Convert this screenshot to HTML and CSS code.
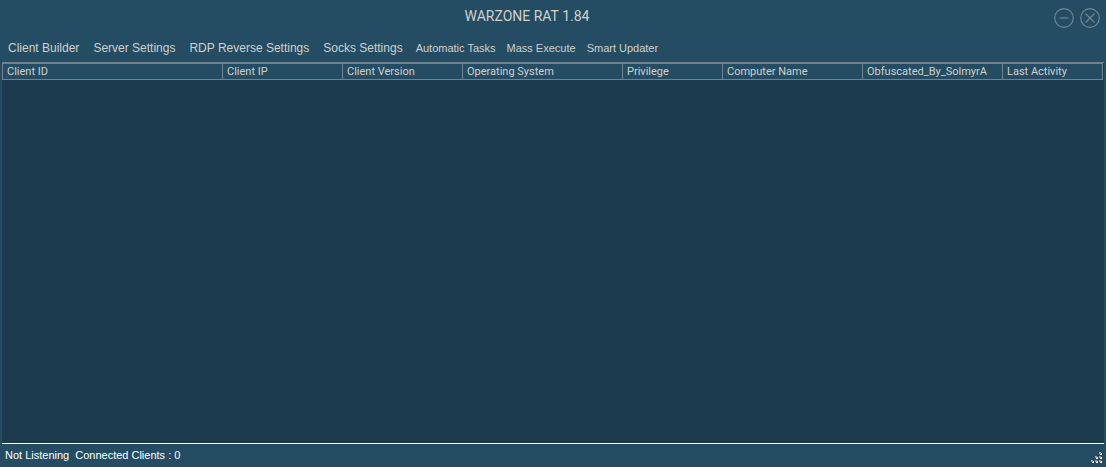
FILE: index.html
```html
<!DOCTYPE html>
<html lang="en">
<head>
<meta charset="utf-8">
<title>WARZONE RAT 1.84</title>
<link rel="stylesheet" href="styles.css">
</head>
<body>
<div class="window">
  <header class="titlebar">
    <h1 class="title">WARZONE RAT 1.84</h1>
    <div class="controls">
      <button class="control" type="button" aria-label="Minimize"><svg viewBox="0 0 20 20"><circle cx="10" cy="10" r="9.3"/><path d="M5.5 10h9"/></svg></button>
      <button class="control" type="button" aria-label="Close"><svg viewBox="0 0 20 20"><circle cx="10" cy="10" r="9.3"/><path d="M5.5 5.5l9 9M14.5 5.5l-9 9"/></svg></button>
    </div>
  </header>
  <nav class="menu">
    <div class="group">
      <button class="item" type="button">Client Builder</button>
      <button class="item" type="button">Server Settings</button>
      <button class="item" type="button">RDP Reverse Settings</button>
      <button class="item" type="button">Socks Settings</button>
    </div>
    <div class="group small">
      <button class="item" type="button">Automatic Tasks</button>
      <button class="item" type="button">Mass Execute</button>
      <button class="item" type="button">Smart Updater</button>
    </div>
  </nav>
  <main class="list">
    <table class="clients">
      <colgroup><col class="w220"><col class="w120"><col class="w120"><col class="w160"><col class="w100"><col class="w140"><col class="w140"><col class="w100"></colgroup>
      <thead>
        <tr><th>Client ID</th><th>Client IP</th><th>Client Version</th><th>Operating System</th><th>Privilege</th><th>Computer Name</th><th>Obfuscated_By_SolmyrA</th><th>Last Activity</th></tr>
      </thead>
    </table>
  </main>
  <footer class="status">
    <span>Not Listening</span>
    <span>Connected Clients : 0</span>
    <svg class="grip" viewBox="0 0 12 12" aria-hidden="true">
      <path class="grip-light" d="M9 1h2v2h-2zM5 5h2v2h-2zM9 5h2v2h-2zM1 9h2v2h-2zM5 9h2v2h-2zM9 9h2v2h-2z"/>
      <path class="grip-dark" d="M8 0h2v2h-2zM4 4h2v2h-2zM8 4h2v2h-2zM0 8h2v2h-2zM4 8h2v2h-2zM8 8h2v2h-2z"/>
    </svg>
  </footer>
</div>
</body>
</html>
```
FILE: styles.css
```css
* {
  box-sizing: border-box;
}

body {
  margin: 0;
  background: #244c62;
  color: #d0d0cc;
  font-family: "Liberation Sans", Arial, sans-serif;
  font-size: 11px;
}

.window {
  display: flex;
  flex-direction: column;
  min-height: 100vh;
}

.titlebar {
  display: grid;
  grid-template-columns: 1fr auto 1fr;
  padding: 8px 6px 4px 0;
}

.title {
  grid-column: 2;
  margin: 0;
  padding-right: 46px;
  font-family: Roboto, Arial, sans-serif;
  font-size: 14px;
  font-weight: 400;
  line-height: 16px;
}

.controls {
  display: flex;
  justify-content: flex-end;
  gap: 6px;
}

.control {
  width: 20px;
  height: 20px;
  padding: 0;
  border: 0;
  background: none;
}

.control svg {
  display: block;
  fill: none;
  stroke: #6f8795;
  stroke-width: 1.2;
}

.menu {
  display: flex;
  gap: 13px;
  padding: 6px 8px 4px;
}

.group {
  display: flex;
  gap: 14px;
  font-size: 12px;
}

.group.small {
  gap: 11px;
  font-size: 11px;
}

.item {
  padding: 0;
  border: 0;
  background: none;
  color: inherit;
  font: inherit;
  line-height: 20px;
}

.list {
  flex: 1;
  margin: 0 2px;
  padding-right: 1px;
  border-top: 1px solid #70838e;
  background: #1c3b4e;
}

.clients {
  width: 100%;
  table-layout: fixed;
  border-collapse: collapse;
  font-family: Roboto, Arial, sans-serif;
}

.clients th {
  height: 16px;
  padding: 1px 0 0 4px;
  border: 1px solid #70838e;
  background: #244c62;
  font-weight: 400;
  line-height: 14px;
  text-align: left;
  white-space: nowrap;
}

.w100 {
  width: 100px;
}

.w120 {
  width: 120px;
}

.w140 {
  width: 140px;
}

.w160 {
  width: 160px;
}

.w220 {
  width: 220px;
}

.status {
  display: flex;
  align-items: center;
  gap: 6px;
  height: 24px;
  margin: 0 2px;
  padding: 0 1px 1px 3px;
  border-top: 1px solid #ffffff;
  color: #ffffff;
}

.grip {
  align-self: flex-end;
  width: 12px;
  height: 12px;
  margin: 0 0 2px auto;
}

.grip-light {
  fill: #ffffff;
}

.grip-dark {
  fill: #a0a0a0;
}
```
